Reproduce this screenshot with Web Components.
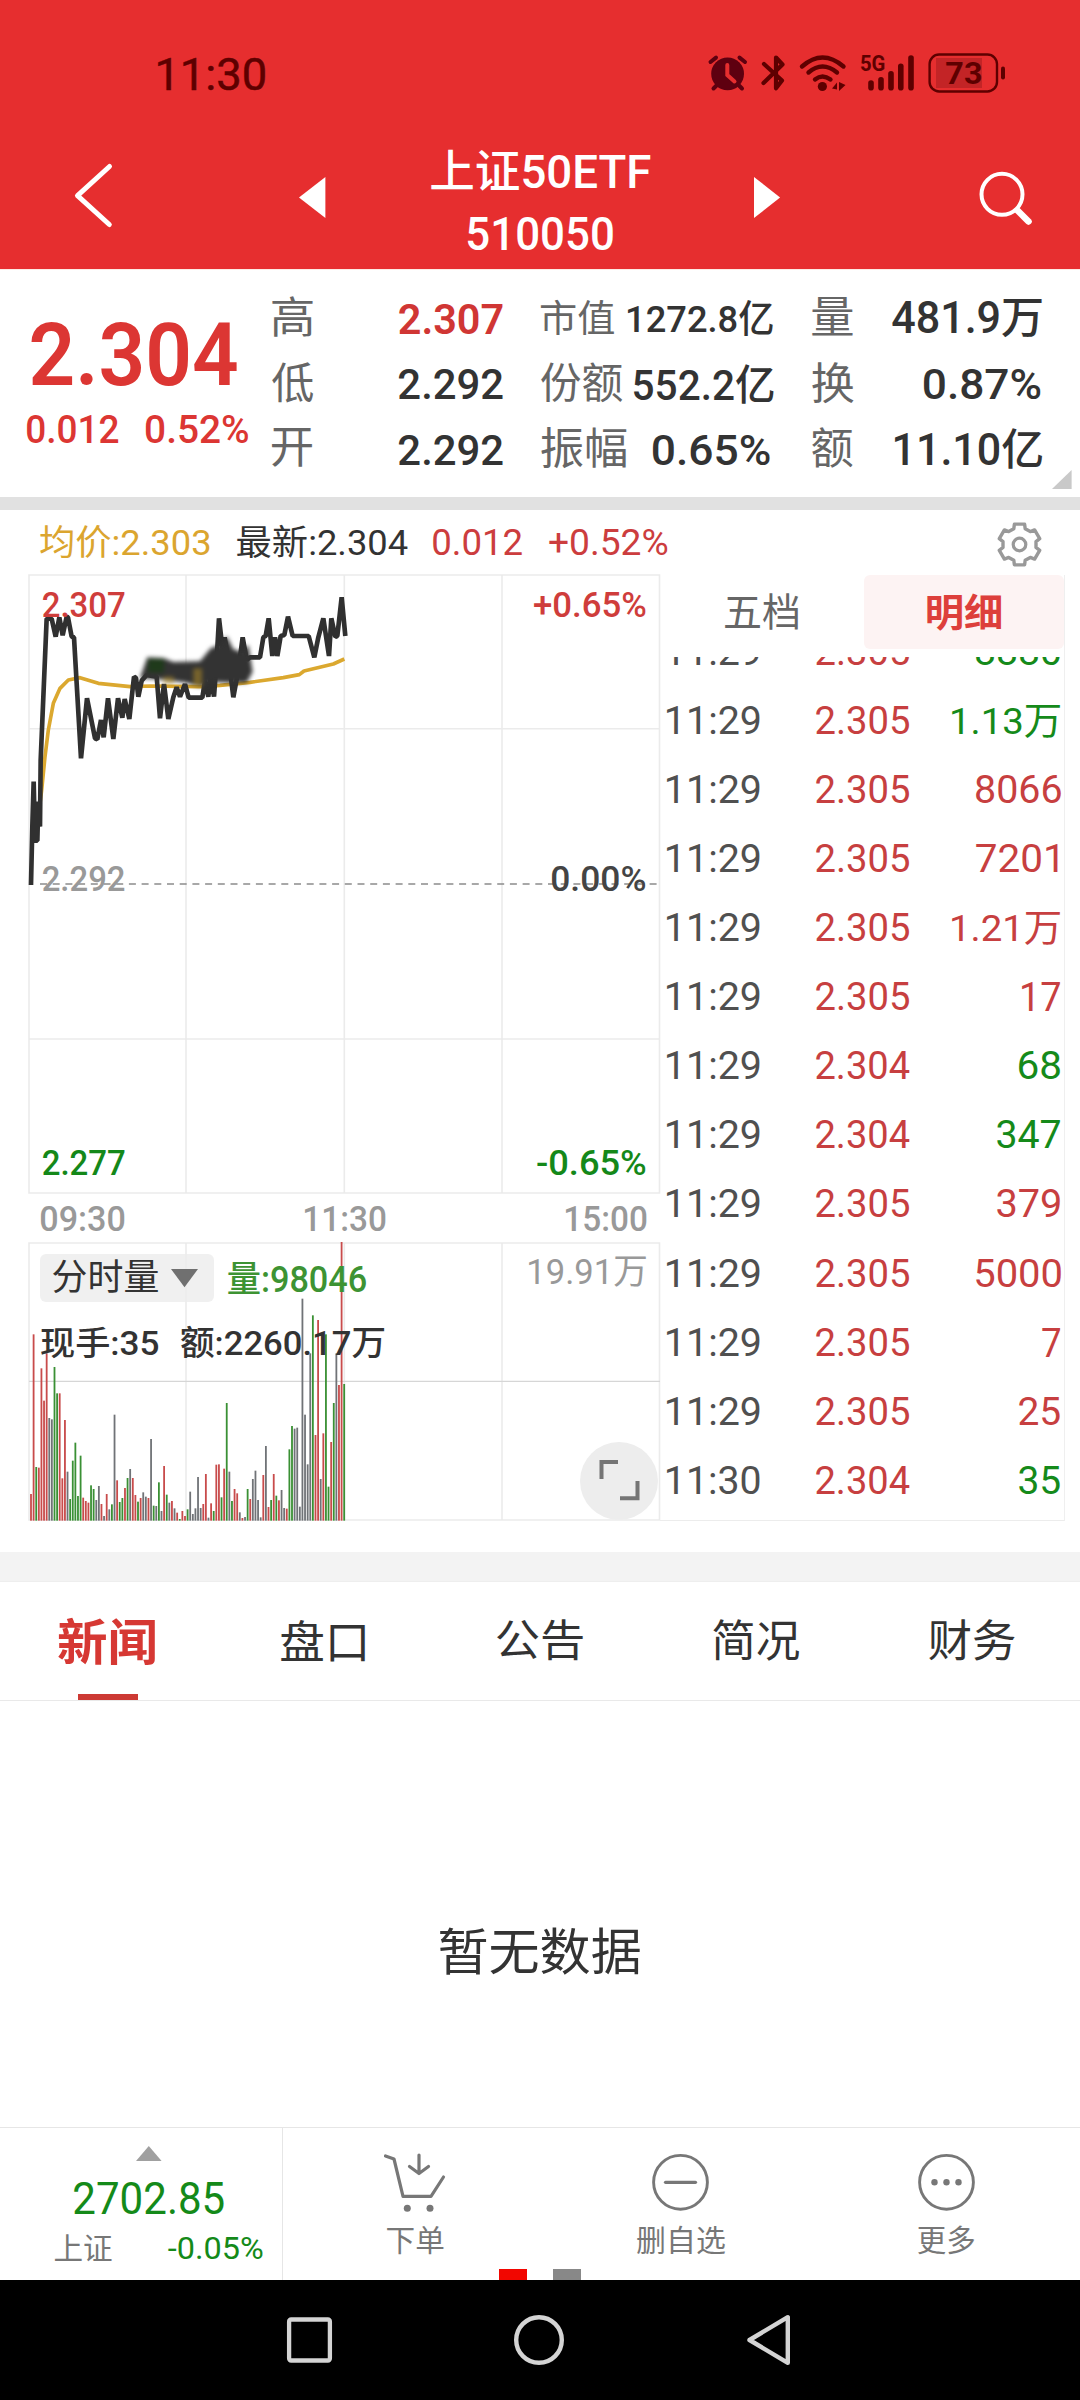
<!DOCTYPE html>
<html lang="zh-CN">
<head>
<meta charset="utf-8">
<title>上证50ETF 510050</title>
<style>
  html,body{margin:0;padding:0;background:#fff}
  body{width:1080px;height:2400px;overflow:hidden;font-family:Roboto,"Noto Sans CJK SC",sans-serif;color:#333}
</style>
</head>
<body>
<stock-app></stock-app>
<script>
const FAMILY = 'Roboto, "Noto Sans CJK SC", sans-serif';
const ctx = document.createElement('canvas').getContext('2d');

/* A text whose visible glyph box is exactly w by h. */
class InkText extends HTMLElement {
  constructor() {
    super();
    this.attachShadow({mode: 'open'}).innerHTML =
      `<style>:host{display:block;flex:none}span{display:block;width:max-content;line-height:1;white-space:pre;transform-origin:0 0;font-family:${FAMILY}}</style><span><slot></slot></span>`;
  }
  connectedCallback() {
    const w = +this.getAttribute('w'), h = +this.getAttribute('h');
    ctx.font = `${getComputedStyle(this).fontWeight} 100px ${FAMILY}`;
    const m = ctx.measureText(this.textContent);
    const k = h / (m.actualBoundingBoxAscent + m.actualBoundingBoxDescent);
    const sx = w / ((m.actualBoundingBoxLeft + m.actualBoundingBoxRight) * k);
    const base = (100 + m.fontBoundingBoxAscent - m.fontBoundingBoxDescent) / 2 * k;
    const top = base - m.actualBoundingBoxAscent * k - (/\d/.test(this.textContent) ? 1 : 0);
    this.style.width = w + 'px';
    this.style.height = h + 'px';
    const s = this.shadowRoot.querySelector('span');
    s.style.fontSize = 100 * k + 'px';
    s.style.transform = `translate(${m.actualBoundingBoxLeft * k * sx}px,${-top}px) scaleX(${sx})`;
  }
}
customElements.define('ink-text', InkText);

const T = (text, w, h, style = '') => `<ink-text w="${w}" h="${h}" style="${style}">${text}</ink-text>`;
const svg = (x, y, w, h, body, style = '') =>
  `<svg width="${w}" height="${h}" viewBox="${x} ${y} ${w} ${h}" fill="none" style="display:block;flex:none;overflow:visible;${style}">${body}</svg>`;
const define = (name, css, html) => customElements.define(name, class extends HTMLElement {
  constructor() {
    super();
    this.attachShadow({mode: 'open'}).innerHTML = `<style>:host{display:block;box-sizing:border-box}*{box-sizing:border-box}${css}</style>${html}`;
  }
});

/* ---------- status bar ---------- */
const bars = [[871,80],[881,76.7],[891,70.7],[900.8,63.3],[911,55]]
  .map(([x, y]) => `<path d="M${x} ${y + 3}V87.7" stroke="#5e0000" stroke-width="5.6" stroke-linecap="round"/>`).join('');
define('status-bar', `
  :host{height:130px;padding:53px 74px 0 158.4px;display:flex;color:#5e0000;align-items:flex-start}
  .sp{flex:1}.r{display:flex;align-items:flex-start}`, `
  ${T('11:30', 106.8, 33.3, 'margin-top:3px;font-weight:400;-webkit-text-stroke:.5px #5e0000')}
  <div class="sp"></div><div class="r">
  ${svg(708,53,39,40,`<g stroke="#5e0010" stroke-linecap="round"><circle cx="727.6" cy="73.8" r="16.4" fill="#5e0010" stroke="none"/><path d="M710.5 62L716 57.6M739.5 57.6L745 62" stroke-width="4"/><path d="M713.5 88.5l4-4M742 88.5l-4-4" stroke-width="4"/><path d="M727.3 65V75L734.5 81.5" stroke="#e62e2f" stroke-width="4"/></g>`)}
  ${svg(761,53,25,40,`<path d="M764 64L782 80.5L776 88.3V57.5L782.5 64.5L763.5 83" stroke="#5e0000" stroke-width="4.2" stroke-linejoin="round" stroke-linecap="round"/>`, 'margin-left:14px')}
  ${svg(799,53,48,40,`<g stroke="#5e0000" stroke-width="4.4" stroke-linecap="round"><path d="M802 66.5Q822.5 48.5 843.5 66.5"/><path d="M808.5 72.5Q822.5 60.5 837 72.5"/><path d="M815 79.5Q822.5 73.5 830.5 79.5"/></g><circle cx="822.4" cy="86.5" r="4.6" fill="#5e0000"/><path d="M832 88.5l5-6v7zM839 82v9l6.5-6z" fill="#5e0000"/>`, 'margin-left:13px')}
  ${T('5G', 23.4, 16.7, 'margin:2px 0 0 14px;font-weight:700')}
  ${svg(868,53,47,40,bars,'margin-left:-16.4px')}
  ${svg(928,53,78,40,`<rect x="936" y="58" width="46" height="30" fill="#c32426"/><rect x="929.6" y="54.5" width="67.4" height="37" rx="9.5" stroke="#5e0000" stroke-width="2.4"/><path d="M1003 68.5v9" stroke="#5e0000" stroke-width="4" stroke-linecap="round"/>`, 'margin-left:13px')}
  ${T('73', 35, 23.7, 'margin:7px 25.3px 0 -60.3px;font-weight:700;position:relative')}
  </div>`);

/* ---------- title bar ---------- */
define('title-bar', `
  :host{height:138px;display:flex;color:#fff;align-items:flex-start;padding:19px 48px 0 74px}
  .m{display:flex;flex-direction:column;align-items:center;gap:25.3px;margin-left:105px;font-weight:500}`, `
  ${svg(74,149,39,93,`<path d="M109.5 166.5L77.5 195.7L109.3 224.5" stroke="#fff" stroke-width="5" stroke-linecap="round" stroke-linejoin="round"/>`)}
  ${svg(298.6,149,27,93,`<path d="M298.6 197.5L325 177V218Z" fill="#fff"/>`,'margin-left:185.6px')}
  <div class="m">${T('上证50ETF', 219.5, 41.7)}${T('510050', 144.7, 34, 'margin-left:-1px')}</div>
  ${svg(753.9,149,27,93,`<path d="M780 197.5L753.9 177V218Z" fill="#fff"/>`,'margin-left:104.2px')}
  <div class="sp" style="flex:1"></div>
  ${svg(978,149,54,93,`<circle cx="1002" cy="194.3" r="20.5" stroke="#fff" stroke-width="4"/><path d="M1017.5 210.5L1028.5 221.5" stroke="#fff" stroke-width="6.5" stroke-linecap="round"/>`)}
`);

/* ---------- quote summary ---------- */
define('quote-panel', `
  :host{height:227px;display:flex;padding-left:26.5px;border-top:1px solid #fdebe4}
  .price{width:245.5px;flex:none;color:#dc3633;padding-top:50.5px}
  .chg{display:flex;justify-content:space-between;width:221.5px;margin-top:29.4px;font-weight:500}
  .groups{width:769.7px;flex:none;display:flex;justify-content:space-between;padding-top:15px}
  .row{display:flex;justify-content:space-between;align-items:center;height:65.5px;color:#333;font-weight:500}
  .row>:first-child{color:#666;font-weight:400}
  .corner{align-self:flex-end;margin:0 0 7px 10.5px}`, `
  <div class="price">${T('2.304', 206, 64.6, 'font-weight:600;margin-left:4.5px')}
    <div class="chg">${T('0.012', 91.5, 29.3)}${T('0.52%', 102.3, 29.3)}</div></div>
  <div class="groups">
    <div style="width:230.5px">
      <div class="row">${T('高', 40.6, 40.6)}${T('2.307', 103.5, 32, 'color:#d03634;font-weight:600')}</div>
      <div class="row">${T('低', 41, 41)}${T('2.292', 104, 32)}</div>
      <div class="row">${T('开', 40, 38.7)}${T('2.292', 104, 32)}</div>
    </div>
    <div style="width:232px">
      <div class="row">${T('市值', 73, 35.5)}${T('1272.8亿', 144.7, 35.3)}</div>
      <div class="row">${T('份额', 81.5, 40)}${T('552.2亿', 139.5, 39.3)}</div>
      <div class="row">${T('振幅', 85.5, 41)}${T('0.65%', 116.7, 32, 'margin-right:3.5px')}</div>
    </div>
    <div style="width:230px">
      <div class="row">${T('量', 40.7, 38.6)}${T('481.9万', 149.7, 38)}</div>
      <div class="row">${T('换', 41.5, 41)}${T('0.87%', 116.5, 32, 'margin-right:1.7px')}</div>
      <div class="row">${T('额', 41, 41)}${T('11.10亿', 147, 41)}</div>
    </div>
  </div>
  ${svg(1052.4,470,20,19,'<path d="M1052.4 489H1072V470Z" fill="#c9c9c9"/>').replace('<svg', '<svg class="corner"')}`);

/* ---------- chart legend ---------- */
const gear = (() => {
  const p = [];
  for (let k = 0; k < 6; k++) for (const [r, d] of [[16.8,-20],[21,-14],[21,14],[16.8,20]]) {
    const a = (k * 60 - 90 + d) * Math.PI / 180;
    p.push((1019.5 + r * Math.cos(a)).toFixed(1) + ' ' + (544.5 + r * Math.sin(a)).toFixed(1));
  }
  return `<path d="M${p.join('L')}Z" stroke="#999" stroke-width="3.4" stroke-linejoin="round"/><circle cx="1019.5" cy="544.5" r="6.3" stroke="#999" stroke-width="3.2"/>`;
})();
define('chart-legend', `:host{height:65px;display:flex;align-items:center;padding:0 38px 1px 39.6px;color:#cc3d3e}`, `
  ${T('均价:2.303', 169.4, 33.3, 'color:#dba52f')}
  ${T('最新:2.304', 170.4, 33.3, 'color:#333;margin-left:27.6px')}
  ${T('0.012', 89, 27, 'margin-left:26px')}
  ${T('+0.52%', 118.2, 27, 'margin-left:27.3px')}
  <div style="flex:1"></div>${svg(997,522,45,45,gear,'margin-top:5px')}`);

/* ---------- intraday price chart ---------- */
const price = '93,975 97,800 101,665 105,842 112,842 115,725 120,800 122,600 140,176 155,176 167,230 178,172 188,226 200,170 204,172 215,230 222,232 243,595 261,415 285,535 292,538 303,480 311,532 324,415 340,537 354,415 367,473 374,417 388,477 402,350 408,354 415,410 425,362 440,345 470,350 480,475 492,372 505,477 520,412 530,382 540,410 555,372 566,413 607,413 615,362 625,410 632,352 642,410 650,300 657,175 668,270 674,232 690,330 700,412 715,330 728,232 740,300 750,292 780,292 790,232 797,228 806,175 817,288 825,232 832,288 842,228 853,225 864,170 878,228 926,228 943,292 955,232 970,175 987,288 994,175 1006,230 1012,228 1025,112 1036,228';
define('trend-chart', `
  :host{display:grid;width:631px;height:618px;font-weight:500}
  :host>*{grid-area:1/1}
  .lab{padding:16px 14.5px 0 13.5px}
  .row{display:flex;justify-content:space-between;height:26px}`, `
  ${svg(29,575,631,618,`
    <g stroke="#ebebeb" stroke-width="1.6"><path d="M29 575H659.500V1193H29ZM186 575V1193M344.3 575V1193M502 575V1193M29 728.8H660M29 1039H660"/></g>
    <path d="M40 884H660" stroke="#8c8c8c" stroke-width="1.6" stroke-dasharray="7 5.7"/>
    <g transform="translate(0 560) scale(.33333)">
      <path d="M120 730L125 690L135 590L145 510L160 430L180 385L205 360L240 353L295 370L390 380L450 378L600 380L660 376L750 367L850 353L898 344L912 333L1000 312L1033 297" stroke="#dba82f" stroke-width="11" stroke-linejoin="round"/>
      <polyline points="${price}" stroke="#303030" stroke-width="14" stroke-linejoin="bevel"/>
      <g style="filter:blur(6px)"><path d="M420 355L442 292L490 294L520 306L600 304L632 265L665 252L680 228L700 268L722 275L745 255L758 335L740 368L690 368L640 366L600 382L560 368L500 360L460 356Z" fill="#333"/><path d="M445 297h47v40h-47z" fill="#1f3a1b"/><path d="M580 325h26v55h-26z" fill="#a58428" opacity=".6"/><path d="M490 350h32v22h-32z" fill="#a58428" opacity=".6"/></g>
    </g>`)}
  <div class="lab">
    <div class="row" style="color:#cf3d3b;margin-bottom:248.3px">${T('2.307', 81.6, 25.5)}${T('+0.65%', 111.5, 26)}</div>
    <div class="row" style="margin-bottom:258px">${T('2.292', 81.6, 26, 'color:#999')}${T('0.00%', 93.2, 26, 'color:#444')}</div>
    <div class="row" style="color:#148819">${T('2.277', 81.6, 26)}${T('-0.65%', 108.5, 26)}</div>
  </div>`);

define('time-axis', `:host{height:50px;width:631px;display:flex;justify-content:space-between;padding:11.7px 14px 0 12px;color:#999;font-weight:500}`,
  `${T('09:30', 83.3, 26)}${T('11:30', 80.3, 26, 'margin-left:1px')}${T('15:00', 80.3, 26)}`);

/* ---------- volume chart ---------- */
const vol = '1062r 583r 981g 983r 685r 782r 640r 834k 838k 681g 760g 760r 1015r 840r 995k 1077g 962g 908g 1068g 947g 1073r 1083r 1088r 1036g 1047g 1080k 1038k 1092r 1128k 1062r 1108k 1093g 824k 1021r 1086g 1074g 1044r 1014g 987k 1014r 1065r 1085g 1074r 1057k 1070k 1074r 897k 1097g 1098k 1027g 1113k 978r 1064g 1088k 1083r 1105k 1118r 1137g 1113r 1128r 1108g 1055k 1122k 1105k 1011k 1104k 1092r 1002r 1133k 1090r 1113g 974r 973r 1072g 986r 789g 995k 1083g 1047r 1060r 1117k 1134r 1131k 1047g 1077r 1017k 992k 1080k 1132k 1005r 918k 1101r 1080g 1002r 1067g 1081r 1050k 1104k 1106r 928g 858g 866k 863k 1100k 476k 824k 973k 640k 526g 885r 540r 1017k 880r 583g 1040g 906r 789g 640k 735r 306r 732g'.split(' ');
const ink = {r: '#c84b4b', g: '#3a9034', k: '#707377'};
const volBars = vol.map((v, i) => {
  const y = parseInt(v);
  return `<rect x="${(90.3 + 7.83 * i).toFixed(1)}" y="${y}" width="5.4" height="${1142 - y}" fill="${ink[v.slice(-1)]}"/>`;
}).join('');
define('volume-chart', `
  :host{display:grid;width:631px;height:278px;font-weight:500}
  :host>*{grid-area:1/1}
  .lab{padding:11px 14px 0 11px}
  .row{display:flex;height:48px;align-items:flex-start}
  .btn{width:174px;height:48px;border-radius:6px;background:rgba(236,236,236,.8);display:flex;align-items:center;padding-left:13.3px;gap:12.4px;font-weight:400}
  .full{align-self:end;justify-self:end;margin:0 2px 1px 0;width:78px;height:78px;border-radius:50%;background:#ededed;display:flex;align-items:center;justify-content:center}`, `
  ${svg(29,1243,631,278,`<path d="M29 1243H659.500V1520H29ZM186 1243V1520M344.3 1243V1520M502 1243V1520" stroke="#ebebeb" stroke-width="1.6"/><path d="M29 1381.3H660" stroke="#d6d6d6" stroke-width="1.2"/>`)}
  <div class="lab">
    <div class="row"><div class="btn">${T('分时量', 105, 33.3)}${svg(0,0,27,18.3,'<path d="M0 0H27L13.5 18.3Z" fill="#707070"/>')}</div>
      ${T('量:98046', 138, 32.3, 'color:#3d9333;margin:7.7px 0 0 13.7px')}<div style="flex:1"></div>${T('19.91万', 116.7, 30, 'color:#999;margin-top:3.7px;font-weight:400')}</div>
    <div class="row" style="margin-top:24.5px;padding-left:1px">${T('现手:35', 117.3, 31.7)}${T('额:2260.17万', 203, 32, 'margin-left:22.7px')}</div>
  </div>
  ${svg(29,1243,631,278,`<g transform="translate(0 1140) scale(.33333)">${volBars}</g>`)}
  <div class="full">${svg(599,1460,41,41,'<path d="M618 1462H601.5V1479M620 1498.3H637.5V1481" stroke="#757575" stroke-width="4"/>')}</div>`);

/* ---------- tick list ---------- */
const R = '#c73f40', G = '#158a1a';
const ticks = [
  ['11:29','2.305',R,'8880',84,29,1,G],['11:29','2.305',R,'1.13万',108,32.3,1,G],['11:29','2.305',R,'8066',85,29,0,R],
  ['11:29','2.305',R,'7201',81.6,29,3.4,R],['11:29','2.305',R,'1.21万',108,32.3,1,R],['11:29','2.305',R,'17',38,29,1,R],
  ['11:29','2.304',R,'68',41,29,.5,G],['11:29','2.304',R,'347',63,29,1,G],['11:29','2.305',R,'379',63,29,.5,R],
  ['11:29','2.305',R,'5000',85,29,0,R],['11:29','2.305',R,'7',18,29,1,R],['11:29','2.305',R,'25',41,29,.5,R],['11:30','2.304',R,'35',41,29,.5,G]];
define('tick-panel', `
  :host{width:405px;height:946px;border-right:1px solid #efefef;border-bottom:1px solid #ececec}
  .tabs{display:flex;height:81.7px}
  .tab{width:203.5px;height:73.7px;display:flex;align-items:center;justify-content:center;border-radius:6px;color:#666}
  .tab.on{width:200.500px;background:#fdf3f3;color:#dd3f3b;font-weight:700}
  .list{height:863px;overflow:hidden}
  .rows{margin-top:-19.7px}
  .row{height:69.07px;display:flex;align-items:flex-start;padding-right:3.3px;padding-left:6.7px}`, `
  <div class="tabs"><div class="tab">${T('五档', 73.3, 36.4)}</div><div class="tab on">${T('明细', 74, 36.4)}</div></div>
  <div class="list"><div class="rows">${ticks.map(([t, p, pc, v, w, h, mr, vc]) =>
    `<div class="row">${T(t, 92.6, 29, 'color:#505050')}${T(p, 93.3, 29, `color:${pc};margin-left:56.7px`)}<div style="flex:1"></div>${T(v, w, h, `color:${vc};margin-right:${mr}px;margin-top:${h > 30 ? -1 : 0}px`)}</div>`).join('')}</div></div>`);

define('chart-area', `:host{display:flex;padding-left:29px;height:977px}.l{display:flex;flex-direction:column;width:631px;flex:none}`,
  `<div class="l"><trend-chart></trend-chart><time-axis></time-axis><volume-chart></volume-chart></div><tick-panel></tick-panel>`);

/* ---------- section tabs ---------- */
define('section-tabs', `
  :host{height:119px;display:flex;border-bottom:1.5px solid #e9e9e9;color:#333}
  .t{flex:1;display:flex;justify-content:center;padding-top:38.500px}
  .on{padding-top:36px;flex-direction:column;align-items:center;justify-content:space-between;color:#d63833;font-weight:700}
  i{display:block;width:60px;height:6px;background:#cd3a34}`, `
  <div class="t on">${T('新闻', 97, 47.3,'margin-right:3px')}<i></i></div>
  <div class="t">${T('盘口', 84, 41.5, 'margin-right:3px')}</div><div class="t">${T('公告', 86, 41.5)}</div>
  <div class="t">${T('简况', 86, 41.5)}</div><div class="t">${T('财务', 86, 41.5)}</div>`);

define('empty-state', `:host{height:426px;display:flex;justify-content:center;padding-top:227.500px;color:#333}`, T('暂无数据', 199.7, 47));

/* ---------- bottom toolbar ---------- */
define('tool-item', `:host{flex:1;display:flex;flex-direction:column;align-items:center;padding-top:26px;color:#777}div{height:60px;margin-bottom:13px}`,
  `<div><slot name="icon"></slot></div><slot></slot>`);
define('tool-bar', `
  :host{height:153px;display:flex;border-top:1.5px solid #e6e6e6;color:#148a19}
  .idx{width:283px;border-right:1px solid #e6e6e6;padding-top:18.5px;flex:none}
  .r{display:flex;align-items:center;justify-content:space-between;padding:0 19.5px 0 54.8px;margin-top:19.500px}
  .items{flex:1;display:flex;flex-direction:column}
  .tools{display:flex;flex:1;margin:0 1px 0 -1px}
  .pager{display:flex;gap:26.5px;height:11px;padding-left:216.3px}
  .pager b{width:27.4px;background:#f20600}.pager b+b{background:#888}`, `
  <div class="idx">${svg(0,0,25.6,15,'<path d="M0 15L12.8 0L25.6 15Z" fill="#a0a0a0"/>','margin-left:136.4px')}
    ${T('2702.85', 150, 32.3, 'margin:20.5px 0 0 73.7px')}
    <div class="r">${T('上证', 56.8, 26.7, 'color:#777')}${T('-0.05%', 94.3, 23)}</div></div>
  <div class="items"><div class="tools">
    <tool-item>${svg(385,2154,61,58,'<g stroke="#777" stroke-width="3.2" stroke-linecap="round" stroke-linejoin="round"><path d="M386.5 2156L395 2159L404 2196.3H432L444.5 2177"/><path d="M420 2155V2173M410.5 2166.5L420 2173.5L429.5 2166.5"/></g><circle cx="408.3" cy="2208.3" r="3.5" fill="#777"/><circle cx="431" cy="2208.3" r="3.5" fill="#777"/>').replace('<svg','<svg slot="icon"')}${T('下单', 56.3, 27.6)}</tool-item>
    <tool-item>${svg(652,2154,57,57,'<circle cx="680.5" cy="2182.3" r="26.9" stroke="#777" stroke-width="2.9"/><path d="M665.5 2182.3H695.5" stroke="#777" stroke-width="3.2" stroke-linecap="round"/>').replace('<svg','<svg slot="icon"')}${T('删自选', 88, 27.6)}</tool-item>
    <tool-item>${svg(918,2154,57,57,'<circle cx="946.5" cy="2182.3" r="26.9" stroke="#777" stroke-width="2.9"/><g fill="#777"><circle cx="934.5" cy="2182.3" r="3.2"/><circle cx="946.5" cy="2182.3" r="3.2"/><circle cx="958.5" cy="2182.3" r="3.2"/></g>').replace('<svg','<svg slot="icon"')}${T('更多', 56.3, 27.6)}</tool-item>
  </div><div class="pager"><b></b><b></b></div></div>`);

define('system-nav', `:host{height:120px;background:#000;display:flex;padding:35px 290px 0 286.5px;justify-content:space-between}`, `
  ${svg(286.5,2315,45,50,'<rect x="288.6" y="2319.5" width="40.8" height="41" rx="2" stroke="#d4d4d4" stroke-width="4.3"/>')}
  ${svg(515,2315,50,50,'<circle cx="540" cy="2340" r="22.8" stroke="#d4d4d4" stroke-width="4.4"/>')}
  ${svg(747,2315,43,50,'<path d="M749.5 2340L787.8 2317.2V2362.8Z" stroke="#d4d4d4" stroke-width="4.4" stroke-linejoin="round"/>')}`);

define('stock-app', `
  :host{width:1080px;height:2400px;background:#fff;overflow:hidden}
  header{background:#e62e2f;height:269px}
  .band{height:13.3px;background:#e1e1e1;margin-top:.7px}
  .band2{height:30px;background:#f3f3f3;border-bottom:1px solid #eee}`, `
  <header><status-bar></status-bar><title-bar></title-bar></header>
  <quote-panel></quote-panel><div class="band"></div>
  <chart-legend></chart-legend><chart-area></chart-area>
  <div class="band2"></div>
  <section-tabs></section-tabs><empty-state></empty-state>
  <tool-bar></tool-bar><system-nav></system-nav>`);
</script>
</body>
</html>
